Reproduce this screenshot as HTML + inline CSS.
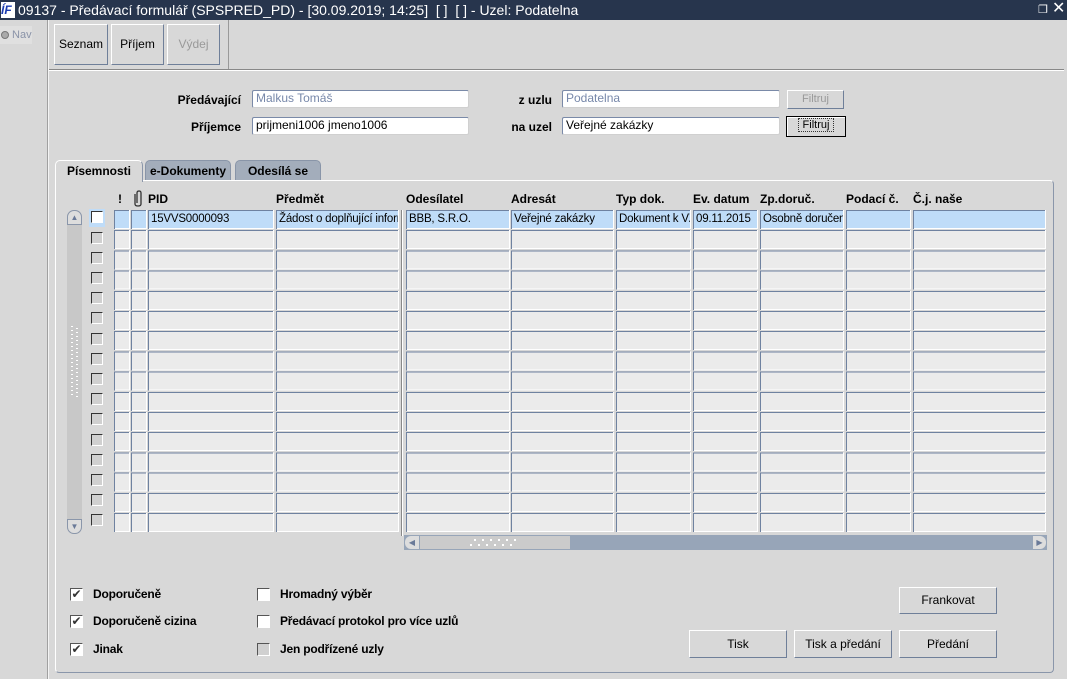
<!DOCTYPE html>
<html><head><meta charset="utf-8"><style>
*{box-sizing:border-box;margin:0;padding:0}
body{width:1067px;height:679px;background:#d8d8d8;font-family:"Liberation Sans",Arial,sans-serif;font-size:12px;color:#000;position:relative;overflow:hidden}
.a{position:absolute}
.title{left:0;top:0;width:1067px;height:20px;background:#27354d;color:#fff;font-size:14px;line-height:20px;padding-left:18px}
.btn{position:absolute;background:#d8d8d8;border:1px solid;border-color:#fff #6f7f99 #6f7f99 #fff;text-align:center;font-size:12px}
.inp{position:absolute;background:#fff;border:1px solid;border-color:#7a8aa8 #d0d0d0 #d0d0d0 #7a8aa8;font-size:12px;line-height:15px;padding-left:3px;border-radius:2px}
.lbl{position:absolute;font-weight:bold;font-size:12px;text-align:right}
.col{position:absolute;top:210px;height:323px;background:repeating-linear-gradient(180deg,#6f82a0 0,#6f82a0 1px,#ebebeb 1px,#ebebeb 18px,#fff 18px,#fff 19px,#d8d8d8 19px,#d8d8d8 20.2px)}
.col:before{content:"";position:absolute;left:0;top:0;bottom:0;width:1px;background:repeating-linear-gradient(180deg,#6f82a0 0,#6f82a0 19px,transparent 19px,transparent 20.2px)}
.col:after{content:"";position:absolute;right:0;top:0;bottom:0;width:1px;background:repeating-linear-gradient(180deg,#fff 0,#fff 19px,transparent 19px,transparent 20.2px)}
.hl{position:absolute;top:211px;height:17px;background:#bfdcf8;font-size:11.5px;line-height:17px;padding-left:2px;white-space:nowrap;overflow:hidden;letter-spacing:-0.2px}
.hd{position:absolute;top:192px;font-weight:bold;font-size:12px}
.cb{position:absolute;width:12px;height:12px;background:#d0d0d0;border:1px solid;border-color:#333 #fff #fff #333}
.ck{position:absolute;width:13px;height:13px;background:#fff;border:1px solid;border-color:#555 #fff #fff #555;font-size:12px;line-height:11px;text-align:center;color:#333}
.bl{position:absolute;font-weight:bold;font-size:12px;letter-spacing:-0.2px}
.tab{position:absolute;top:160px;height:21px;border-radius:5px 5px 0 0;font-weight:bold;font-size:12px;text-align:center;line-height:21px;background:#a3adbb;border:1px solid #8995a8;border-bottom:none}
</style></head><body>
<div class="a title">09137 - Předávací formulář (SPSPRED_PD) - [30.09.2019; 14:25]&nbsp; [ ]&nbsp; [ ] - Uzel: Podatelna</div>
<div class="a" style="left:1px;top:2px;width:14px;height:16px;background:#fff;color:#1a3bb0;font-weight:bold;font-style:italic;font-size:12px;line-height:16px">ÍF</div>
<div class="a" style="left:1038px;top:3px;width:12px;height:12px;color:#fff;font-size:11px">❐</div>
<div class="a" style="left:1052px;top:0;color:#fff;font-size:16px;line-height:18px">✕</div>
<div class="a" style="left:0;top:26px;width:32px;height:18px;background:#e0e0e0;color:#8a93a8;font-size:11px;line-height:18px;padding-left:1px"><span style="display:inline-block;width:8px;height:8px;border-radius:50%;background:#aaa;border:1px solid #777;vertical-align:-1px"></span> Nav</div>
<div class="a" style="left:47px;top:20px;width:1px;height:659px;background:#a0a0a0"></div>
<div class="a" style="left:48px;top:20px;width:1px;height:659px;background:#f4f4f4"></div>
<div class="btn" style="left:54px;top:24px;width:54px;height:41px;line-height:39px">Seznam</div>
<div class="btn" style="left:111px;top:24px;width:53px;height:41px;line-height:39px">Příjem</div>
<div class="btn" style="left:167px;top:24px;width:53px;height:41px;line-height:39px;color:#999">Výdej</div>
<div class="a" style="left:228px;top:20px;width:1px;height:50px;background:#999"></div>
<div class="a" style="left:49px;top:69px;width:1015px;height:1px;background:#888"></div>
<div class="a" style="left:49px;top:70px;width:1015px;height:1px;background:#fff"></div>
<div class="lbl" style="left:150px;top:93px;width:91px">Předávající</div>
<div class="inp" style="left:252px;top:90px;width:217px;height:18px;color:#7788aa">Malkus Tomáš</div>
<div class="lbl" style="left:150px;top:120px;width:91px">Příjemce</div>
<div class="inp" style="left:252px;top:117px;width:217px;height:18px">prijmeni1006 jmeno1006</div>
<div class="lbl" style="left:480px;top:93px;width:72px">z uzlu</div>
<div class="inp" style="left:562px;top:90px;width:218px;height:18px;color:#7788aa">Podatelna</div>
<div class="lbl" style="left:480px;top:120px;width:72px">na uzel</div>
<div class="inp" style="left:562px;top:117px;width:218px;height:18px">Veřejné zakázky</div>
<div class="btn" style="left:787px;top:90px;width:57px;height:19px;line-height:17px;color:#999;font-size:11px">Filtruj</div>
<div class="btn" style="left:786px;top:116px;width:60px;height:21px;line-height:17px;font-size:11px;border:1px solid #000;box-shadow:inset 1px 1px #fff"><span style="border:1px dotted #333;padding:0 4px">Filtruj</span></div>
<div class="tab" style="left:145px;width:86px">e-Dokumenty</div>
<div class="tab" style="left:235px;width:86px">Odesílá se</div>
<div class="a" style="left:55px;top:180px;width:999px;height:493px;border:1px solid;border-color:#fff #8a96aa #8a96aa #fff;border-radius:0 4px 4px 4px"></div>
<div class="tab" style="left:55px;width:88px;background:#d8d8d8;border-color:#fff #8a96aa #fff #fff;height:22px">Písemnosti</div>
<div class="hd" style="left:118px">!</div>
<svg class="a" style="left:132px;top:190px" width="12" height="17" viewBox="0 0 12 17"><path d="M3 4 V14 Q3 16 6 16 Q9 16 9 14 V3 Q9 1 7 1 Q5 1 5 3 V13" fill="none" stroke="#333" stroke-width="1.3"/></svg>
<div class="hd" style="left:148px">PID</div>
<div class="hd" style="left:276px">Předmět</div>
<div class="hd" style="left:406px">Odesílatel</div>
<div class="hd" style="left:511px">Adresát</div>
<div class="hd" style="left:616px">Typ dok.</div>
<div class="hd" style="left:693px">Ev. datum</div>
<div class="hd" style="left:760px">Zp.doruč.</div>
<div class="hd" style="left:846px">Podací č.</div>
<div class="hd" style="left:913px">Č.j. naše</div>
<div class="col" style="left:114px;width:16px"></div>
<div class="col" style="left:131px;width:16px"></div>
<div class="col" style="left:148px;width:126px"></div>
<div class="col" style="left:276px;width:123px"></div>
<div class="a" style="left:401px;top:210px;width:2px;height:326px;background:#888;border-right:1px solid #fff"></div>
<div class="col" style="left:406px;width:104px"></div>
<div class="col" style="left:511px;width:103px"></div>
<div class="col" style="left:616px;width:75px"></div>
<div class="col" style="left:693px;width:65px"></div>
<div class="col" style="left:760px;width:84px"></div>
<div class="col" style="left:846px;width:65px"></div>
<div class="col" style="left:913px;width:133px"></div>
<div class="hl" style="left:115px;width:14px"></div>
<div class="hl" style="left:132px;width:14px"></div>
<div class="hl" style="left:149px;width:124px">15VVS0000093</div>
<div class="hl" style="left:277px;width:121px">Žádost o doplňující inform</div>
<div class="hl" style="left:407px;width:102px">BBB, S.R.O.</div>
<div class="hl" style="left:512px;width:101px">Veřejné zakázky</div>
<div class="hl" style="left:617px;width:73px">Dokument k VZ</div>
<div class="hl" style="left:694px;width:63px">09.11.2015</div>
<div class="hl" style="left:761px;width:82px">Osobně doručen</div>
<div class="hl" style="left:847px;width:63px"></div>
<div class="hl" style="left:914px;width:131px"></div>
<div class="a" style="left:89px;top:209px;width:16px;height:18px;background:#bfdcf8"></div>
<div class="cb" style="left:91px;top:211px;background:#fff"></div>
<div class="cb" style="left:91px;top:232px"></div><div class="cb" style="left:91px;top:252px"></div><div class="cb" style="left:91px;top:272px"></div><div class="cb" style="left:91px;top:292px"></div><div class="cb" style="left:91px;top:312px"></div><div class="cb" style="left:91px;top:333px"></div><div class="cb" style="left:91px;top:353px"></div><div class="cb" style="left:91px;top:373px"></div><div class="cb" style="left:91px;top:393px"></div><div class="cb" style="left:91px;top:413px"></div><div class="cb" style="left:91px;top:434px"></div><div class="cb" style="left:91px;top:454px"></div><div class="cb" style="left:91px;top:474px"></div><div class="cb" style="left:91px;top:494px"></div><div class="cb" style="left:91px;top:514px"></div>
<div class="a" style="left:67px;top:210px;width:15px;height:324px;background:#c8c8c8;border-radius:7px"></div>
<div class="a" style="left:67px;top:210px;width:15px;height:15px;border:1px solid #8a96aa;border-radius:7px 7px 0 0;background:#ddd;color:#6a7a98;font-size:8px;text-align:center;line-height:13px">▲</div>
<div class="a" style="left:67px;top:519px;width:15px;height:15px;border:1px solid #8a96aa;border-radius:0 0 7px 7px;background:#ddd;color:#6a7a98;font-size:8px;text-align:center;line-height:13px">▼</div>
<div class="a" style="left:71px;top:326px;width:2px;height:72px;background:repeating-linear-gradient(180deg,#fff 0,#fff 1px,transparent 1px,transparent 4px)"></div>
<div class="a" style="left:76px;top:328px;width:2px;height:72px;background:repeating-linear-gradient(180deg,#fff 0,#fff 1px,transparent 1px,transparent 4px)"></div>
<div class="a" style="left:404px;top:535px;width:643px;height:15px;background:#97a5b8"></div>
<div class="a" style="left:405px;top:536px;width:14px;height:13px;background:#ddd;border-radius:6px 0 0 6px;color:#6a7a98;font-size:8px;line-height:13px;text-align:center">◀</div>
<div class="a" style="left:420px;top:536px;width:150px;height:13px;background:#cbcbcb"></div>
<div class="a" style="left:474px;top:539px;width:48px;height:2px;background:repeating-linear-gradient(90deg,#fff 0,#fff 2px,transparent 2px,transparent 8px)"></div>
<div class="a" style="left:470px;top:544px;width:48px;height:2px;background:repeating-linear-gradient(90deg,#fff 0,#fff 2px,transparent 2px,transparent 8px)"></div>
<div class="a" style="left:1033px;top:536px;width:13px;height:13px;background:#ddd;border-radius:0 6px 6px 0;color:#6a7a98;font-size:8px;line-height:13px;text-align:center">▶</div>
<div class="ck" style="left:70px;top:588px">✔</div><div class="bl" style="left:93px;top:587px">Doporučeně</div>
<div class="ck" style="left:70px;top:615px">✔</div><div class="bl" style="left:93px;top:614px">Doporučeně cizina</div>
<div class="ck" style="left:70px;top:643px">✔</div><div class="bl" style="left:93px;top:642px">Jinak</div>
<div class="ck" style="left:257px;top:588px"></div><div class="bl" style="left:280px;top:587px">Hromadný výběr</div>
<div class="ck" style="left:257px;top:615px"></div><div class="bl" style="left:280px;top:614px">Předávací protokol pro více uzlů</div>
<div class="ck" style="left:257px;top:643px;background:#d0d0d0"></div><div class="bl" style="left:280px;top:642px">Jen podřízené uzly</div>
<div class="btn" style="left:899px;top:587px;width:98px;height:27px;line-height:25px">Frankovat</div>
<div class="btn" style="left:689px;top:630px;width:98px;height:28px;line-height:26px">Tisk</div>
<div class="btn" style="left:794px;top:630px;width:98px;height:28px;line-height:26px">Tisk a předání</div>
<div class="btn" style="left:899px;top:630px;width:98px;height:28px;line-height:26px">Předání</div>
</body></html>
